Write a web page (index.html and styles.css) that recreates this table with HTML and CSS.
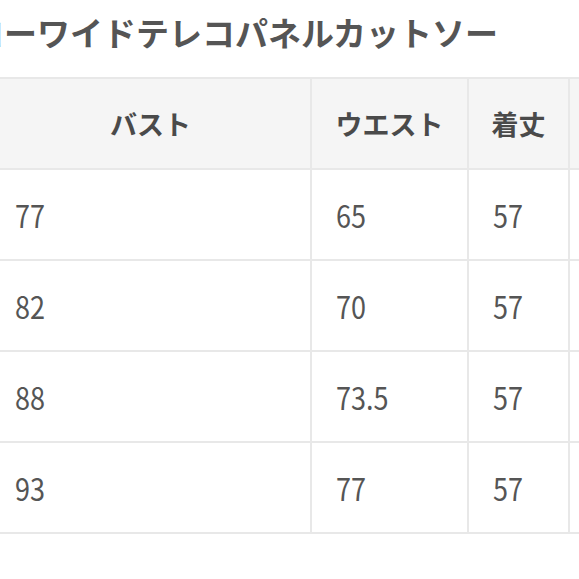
FILE: index.html
```html
<!DOCTYPE html>
<html lang="ja">
<head>
<meta charset="utf-8">
<link rel="stylesheet" href="styles.css">
</head>
<body>
<div class="page">
  <h1 class="title">ナローワイドテレコパネルカットソー</h1>
  <table class="size-table">
    <colgroup>
      <col class="c1"><col class="c2"><col class="c3"><col class="c4">
    </colgroup>
    <thead>
      <tr><th><span class="t">バスト</span></th><th><span class="t">ウエスト</span></th><th><span class="t">着丈</span></th><th></th></tr>
    </thead>
    <tbody>
      <tr><td><span class="n">77</span></td><td><span class="n">65</span></td><td><span class="n">57</span></td><td></td></tr>
      <tr><td><span class="n">82</span></td><td><span class="n">70</span></td><td><span class="n">57</span></td><td></td></tr>
      <tr><td><span class="n">88</span></td><td><span class="n">73.5</span></td><td><span class="n">57</span></td><td></td></tr>
      <tr><td><span class="n">93</span></td><td><span class="n">77</span></td><td><span class="n">57</span></td><td></td></tr>
    </tbody>
  </table>
</div>
</body>
</html>
```

FILE: styles.css
```css
html, body {
  margin: 0;
  padding: 0;
  background: #ffffff;
  overflow: hidden;
}
body {
  width: 579px;
  height: 579px;
  font-family: "Noto Sans CJK JP", "Noto Sans", sans-serif;
  color: #555555;
}
.page {
  width: 579px;
  overflow: hidden;
}
.title {
  margin: 0 0 0 -62px;
  padding-top: 12px;
  height: 65px;
  font-size: 33px;
  line-height: 40px;
  font-weight: 700;
  color: #555555;
  white-space: nowrap;
}
.size-table {
  margin-left: -11px;
  border-collapse: collapse;
  table-layout: fixed;
  width: 700px;
}
.c1 { width: 321px; }
.c2 { width: 157px; }
.c3 { width: 101px; }
.c4 { width: 121px; }
.size-table th,
.size-table td {
  border: 2px solid #e8e8e8;
  height: 91px;
  padding: 0 0 0 24px;
  vertical-align: middle;
  box-sizing: border-box;
}
.size-table th {
  background: #f5f5f5;
  padding: 0;
  text-align: center;
  font-size: 27px;
  font-weight: 700;
  color: #4a4a4a;
}
.size-table td {
  background: #ffffff;
  text-align: left;
  font-size: 27px;
  font-weight: 400;
  color: #555555;
}
.t {
  display: inline-block;
}
.n {
  display: inline-block;
  transform: scaleY(1.14);
}
```
